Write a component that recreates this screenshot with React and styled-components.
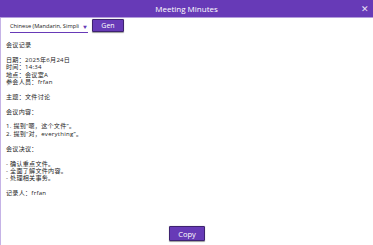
import React from 'react';
import styled, {createGlobalStyle} from 'styled-components';

const Global = createGlobalStyle`
  html, body {
    margin: 0;
    padding: 0;
    background: #ffffff;
  }
  body {
    font-family: "Open Sans", "Noto Sans CJK SC", sans-serif;
  }
`;

const Window = styled.div`
  width: 373px;
  height: 245px;
  display: flex;
  flex-direction: column;
  background: #ffffff;
  overflow: hidden;
`;

const TitleBar = styled.div`
  height: 17px;
  background: #673ab7;
  border-bottom: 1px solid #b39ddb;
  display: flex;
  align-items: center;
  justify-content: center;
  position: relative;
  color: #ffffff;
  font-size: 8px;
`;

const Close = styled.span`
  position: absolute;
  right: 4px;
  top: 2px;
  font-size: 9px;
  line-height: 13px;
  color: #e8e0f5;
`;

const Body = styled.div`
  flex: 1;
  display: flex;
  flex-direction: column;
  border-left: 1.5px solid #c5b3e6;
`;

const Toolbar = styled.div`
  display: flex;
  align-items: center;
  gap: 4px;
  padding: 2px 0 0 9px;
`;

const Select = styled.div`
  width: 78px;
  height: 12px;
  display: flex;
  align-items: center;
  justify-content: space-between;
  border-bottom: 1.5px solid #673ab7;
  font-size: 5.7px;
  color: #222;
  white-space: nowrap;
`;

const Arrow = styled.span`
  color: #673ab7;
  font-size: 4px;
  margin: 1px 1px 0 0;
`;

const Button = styled.button`
  background: #673ab7;
  color: #ffffff;
  border: 1px solid #3d2270;
  border-radius: 1px;
  box-shadow: 0 0.5px 1px rgba(0, 0, 0, 0.4);
  font-family: "Open Sans", sans-serif;
  font-size: ${p => p.small ? '7px' : '7.5px'};
  width: ${p => p.small ? '32px' : '36px'};
  height: ${p => p.small ? '13px' : '15px'};
  padding: 0;
  margin-top: ${p => p.small ? '-2px' : '0'};
`;

const Content = styled.pre`
  flex: 1;
  margin: 0;
  padding: 8px 0 0 5px;
  font-family: "Open Sans", "Noto Sans CJK SC", sans-serif;
  font-size: 6.1px;
  letter-spacing: 0.25px;
  line-height: 7.4px;
  color: #222;
  white-space: pre-wrap;
`;

const Footer = styled.div`
  display: flex;
  justify-content: center;
  padding: 0 0 4px 0;
`;

const minutes = `会议记录

日期：2025年6月24日
时间：14:34
地点：会议室A
参会人员：frfan

主题：文件讨论

会议内容：

1. 提到“嗯，这个文件”。
2. 提到“对，everything”。

会议决议：

- 确认重点文件。
- 全面了解文件内容。
- 处理相关事务。

记录人：frfan`;

export default function App() {
    return (
        <Window>
            <Global/>
            <TitleBar>
                Meeting Minutes
                <Close>✕</Close>
            </TitleBar>
            <Body>
                <Toolbar>
                    <Select>
                        <span>Chinese (Mandarin, Simpli</span>
                        <Arrow>▼</Arrow>
                    </Select>
                    <Button small>Gen</Button>
                </Toolbar>
                <Content>{minutes}</Content>
                <Footer>
                    <Button>Copy</Button>
                </Footer>
            </Body>
        </Window>
    );
}
